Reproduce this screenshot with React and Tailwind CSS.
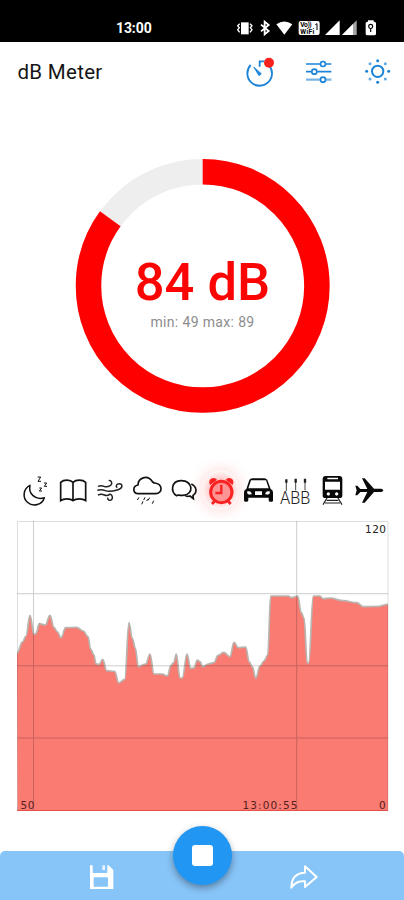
const POINTS = [
  [17, 653], [22.7, 641.7], [26, 636], [30, 615.3], [34, 634.3], [36, 633.3], [39.3, 623.7], [45.3, 625],
  [50, 615.3], [54, 627.3], [57.3, 631.7], [61, 637.7], [65.7, 627.7], [76.7, 627.3], [83.3, 631],
  [88, 636.7], [90.7, 649.3], [94, 655], [96, 664], [99.3, 664.3], [102.7, 659.3], [106.7, 670.7],
  [114.7, 671.3], [118.7, 683], [124.7, 679.3], [129, 622.7], [132.3, 638.3], [135.3, 648],
  [138.3, 666.7], [145.7, 664], [150, 654], [154, 674], [162, 674], [167.3, 676], [171, 665.3],
  [173.7, 662.7], [176.3, 654], [180, 678], [182.3, 678], [187, 654], [190.7, 668.3], [194, 668],
  [197.3, 660], [200, 661.7], [202.7, 666.7], [208, 664], [214, 662.7], [218, 655.3], [223.7, 652.3],
  [230, 656.7], [234, 642.3], [238.3, 647.7], [245.7, 647], [249.3, 662], [252.5, 667], [255.7, 678.3],
  [260, 666], [264, 661], [267.7, 655], [270.7, 596], [288.3, 596], [291.7, 597.7], [297.7, 596],
  [301.3, 612.7], [304, 618], [307.3, 663.3], [308.7, 662.7], [313.3, 596], [320, 596], [323, 598.7],
  [330, 598], [343.3, 600.7], [356.7, 602.7], [363.3, 606.7], [378.3, 606.3], [388, 604.3],
];

// Horizontal control points keep every sample a soft step
const smoothPath = (points) =>
  points.reduce((d, [x, y], i) => {
    if (i === 0) return `M${x} ${y}`;
    const [px, py] = points[i - 1];
    const a = px + (x - px) * 0.4;
    const b = x - (x - px) * 0.4;
    return `${d} C${a} ${py} ${b} ${y} ${x} ${y}`;
  }, '');

function StatusBar() {
  return (
    <div className="h-[42px] shrink-0 bg-black flex items-center pt-[13px] pl-[116px]">
      <span className="w-[120px] text-[14px] leading-none font-bold tracking-[-0.1px] text-white">13:00</span>
      <svg viewBox="48 50 432 66" className="w-[144px] h-[22px]" fill="#fff">
        {/* vibration */}
        <path d="M63 66h23v36H63z" />
        <path d="M59 70l-6 6 5 6-5 6 6 8M90 70l6 6-5 6 5 6-6 8" fill="none" stroke="#fff" strokeWidth="4" />
        {/* bluetooth */}
        <path d="M123 73l23 19-12 10V64l12 10-23 19" fill="none" stroke="#fff" strokeWidth="5.5" />
        {/* wifi */}
        <path d="M169 72q24-17 48 0l-24 31z" />
        {/* vo wifi */}
        <rect x="236" y="62" width="63" height="42" rx="6" />
        <text x="241" y="81" fontSize="20" fontWeight="700" fill="#000" textLength="34">Vo))</text>
        <text x="241" y="100" fontSize="20" fontWeight="700" fill="#000" textLength="42">WiFi</text>
        <path d="M286 73l5-3v19" fill="none" stroke="#000" strokeWidth="3" />
        {/* signal */}
        <path d="M359 60v44h-44z" />
        <path d="M410 60v44h-44z" opacity=".65" />
        <path d="M399 71v33h-33z" />
        {/* battery */}
        <path d="M444 60h17v4h2q5 0 5 5v31q0 5-5 5h-21q-5 0-5-5V69q0-5 5-5h2z" />
        <path d="M452 95V85m-6-7a6 6 0 1 1 12 0q0 6-6 8-6-2-6-8z" fill="none" stroke="#000" strokeWidth="3.5" />
      </svg>
    </div>
  );
}

function Header() {
  return (
    <header className="h-[60px] shrink-0 flex items-center justify-between pl-[17.5px] pr-[12px]">
      <h1 className="text-[20.5px] leading-none tracking-[0.3px] text-[#161616]">dB Meter</h1>
      <div className="flex text-[#1c84d8]">
        {/* timer */}
        <svg viewBox="75 166 90 93" className="w-[30px] h-[31px]" fill="none" stroke="currentColor">
          <path d="M92 190a37 37 0 1 0 55 1M119 195v-16h14" strokeWidth="5.5" />
          <path d="M101 196l23 20-7 6z" fill="currentColor" strokeWidth="2.5" />
          <circle cx="147" cy="183" r="15" fill="#f9211c" stroke="none" />
        </svg>
        {/* sliders */}
        <svg viewBox="255 171 81 90" className="ml-[30px] w-[27px] h-[30px]" fill="none" stroke="currentColor" strokeWidth="5">
          <path d="M258 192h43M317 192h17M258 215h16M292 215h42" />
          <path d="M258 239h43M317 239h17" strokeWidth="7" opacity=".6" />
          <circle cx="309" cy="192" r="7.5" />
          <circle cx="283" cy="215" r="7.5" />
          <circle cx="309" cy="239" r="7.5" />
        </svg>
        {/* brightness */}
        <svg viewBox="432 172 84 87" className="ml-[32px] w-[28px] h-[29px]" fill="currentColor">
          <circle cx="473" cy="215" r="17" fill="none" stroke="currentColor" strokeWidth="6" />
          <circle cx="473" cy="183" r="4.5" />
          <circle cx="473" cy="248" r="4.5" />
          <circle cx="440" cy="215" r="4.5" />
          <circle cx="506" cy="215" r="4.5" />
          <circle cx="450" cy="192" r="4.5" opacity=".7" />
          <circle cx="496" cy="192" r="4.5" opacity=".7" />
          <circle cx="450" cy="238" r="4.5" opacity=".7" />
          <circle cx="496" cy="238" r="4.5" opacity=".7" />
        </svg>
      </div>
    </header>
  );
}

function Gauge() {
  return (
    <div className="mt-[56px] ml-[75px] size-[255px] shrink-0 grid">
      <svg viewBox="0 0 255 255" className="col-start-1 row-start-1 size-[255px]" fill="none" strokeWidth="25.5">
        <circle cx="127.7" cy="127.9" r="114.2" stroke="#eeeeee" />
        <circle
          cx="127.7"
          cy="127.9"
          r="114.2"
          stroke="#ff0000"
          pathLength="100"
          strokeDasharray="85 15"
          transform="rotate(-90 127.7 127.9)"
        />
      </svg>
      <div className="col-start-1 row-start-1 flex flex-col items-center pt-[97px]">
        <div className="text-[52.5px] leading-[54px] font-medium text-[#fb0404] whitespace-nowrap">84 dB</div>
        <div className="mt-[5px] text-[14px] leading-[16px] tracking-[0.35px] text-[#8d8d8d] whitespace-nowrap">min: 49 max: 89</div>
      </div>
    </div>
  );
}

const ICON = 'w-[37px] h-[40px]';

function NoiseLevels() {
  return (
    <div className="mt-[57px] ml-[17px] flex shrink-0">
      {/* sleep */}
      <svg viewBox="21 30 111 120" className={ICON} fill="none" stroke="#111" strokeWidth="4.5">
        <path d="M60 76A31 31 0 1 0 103 113C76 122 54 100 60 76z" strokeLinejoin="round" />
        <path d="M83 51h9l-8 13h9M102 69h8l-7 10h8M88 84h7l-7 9h8" strokeWidth="3" />
      </svg>
      {/* book */}
      <svg viewBox="132 30 111 120" className={ICON} fill="none" stroke="#111" strokeWidth="5">
        <path d="M189 67c-8-9-28-9-37 0v55c9-7 29-7 37 0 9-7 29-7 38 0V67c-9-9-29-9-38 0zv55" />
      </svg>
      {/* wind */}
      <svg viewBox="243 30 111 120" className={ICON} fill="none" stroke="#222" strokeWidth="4.5">
        <path d="M264 79q9-4 18 0t20-3c7-7 1-17-6-14M262 91q12-4 24 1t38-3c15-4 15-18 4-18-9 0-12 9-6 12M264 105q10-4 19 0t16-2c10-1 11 18 1 18-6 0-8-5-6-8" />
      </svg>
      {/* rain */}
      <svg viewBox="24 30 111 120" className={ICON} fill="none" stroke="#111" strokeWidth="5">
        <path d="M53 101C38 99 37 78 54 75c0-20 27-34 44-9q4 3 6 3c25 3 25 31 3 32z" strokeLinejoin="round" />
        <path d="M57 112l-5 8M75 112l-4 8M89 113l-5 8M69 124l-4 9M83 118l-3 5M101 122l-4 9" strokeWidth="3" />
      </svg>
      {/* conversation */}
      <svg viewBox="135 30 111 120" className={ICON} fill="none" stroke="#111" strokeWidth="5">
        <path d="M170 107c-19-11-17-44 13-45 37-1 40 42 6 44-8 1-12-1-14-1z" strokeLinejoin="round" />
        <path d="M214 72c17 8 18 25 5 34l1 10-10-8c-7 2-13 0-16-2" />
      </svg>
      {/* alarm, the active level */}
      <div className="rounded-full shadow-[0_0_14px_rgba(255,80,80,0.25)] bg-[radial-gradient(circle,rgba(255,60,60,0.55),rgba(255,90,90,0.05)_70%)]">
        <svg viewBox="246 30 111 120" className={ICON} fill="none" stroke="#f92222" strokeWidth="8">
          <circle cx="304" cy="96" r="32" strokeWidth="9" fill="#ff9494" />
          <path d="M304 74v25h-18" strokeWidth="7" />
          <path d="M284 123l-8 9M324 123l8 9" />
          <path d="M271 72c-5-13 8-20 17-13zM337 72c5-13-8-20-17-13z" fill="#f92222" strokeWidth="4" />
        </svg>
      </div>
      {/* car */}
      <svg viewBox="12 30 111 120" className={ICON} fill="#090909">
        <path
          fillRule="evenodd"
          d="M43 60q3-5 9-5h36q6 0 9 5l10 27q7 3 7 10v25q0 3-4 3h-5q-4 0-4-4v-8H40v8q0 4-4 4h-5q-4 0-4-4V97q0-7 7-10zM48 61l-8 24h61l-8-24zM37 94q-3 11 13 9c0-8-5-9-13-9zM104 94q3 11-13 9c0-8 5-9 13-9zM60 94v11h21V94z"
        />
      </svg>
      {/* festival */}
      <svg viewBox="123 30 111 120" className={ICON} fill="none" stroke="#222" strokeWidth="2.5">
        <path d="M154 63v30M182 63v28M210 63v28" />
        <path d="M154 58v10M182 56v12M210 56v12" strokeWidth="7" />
        <text
          x="135"
          y="132"
          fontSize="54"
          fontWeight="300"
          textLength="91"
          lengthAdjust="spacingAndGlyphs"
          fontFamily="Roboto"
          fill="#222"
          stroke="none"
        >
          ABB
        </text>
      </svg>
      {/* train */}
      <svg viewBox="234 30 111 120" className={ICON} fill="#090909">
        <path
          fillRule="evenodd"
          d="M272 48h41q9 0 9 9v50q0 7-8 7h-43q-8 0-8-7V57q0-9 9-9zM277 53v5h32v-5zM270 65v24h45V65zM280 97a5 5 0 1 0 .1 0zM305 97a5 5 0 1 0 .1 0z"
        />
        <path d="M276 114l-12 20M309 114l12 20M275 121h35M270 129h45" fill="none" stroke="#222" strokeWidth="3.5" />
      </svg>
      {/* plane */}
      <svg viewBox="345 30 111 120" className={ICON} fill="#090909">
        <path d="M361 77h6l9 10h21L381 55h8l28 31h22q6 2 6 5t-6 5h-22l-28 32h-8l16-32h-21l-9 10h-6l4-15z" />
      </svg>
    </div>
  );
}

function Chart() {
  const line = smoothPath(POINTS);
  return (
    <svg viewBox="17 520 372 292" className="mt-[10px] ml-[17px] w-[372px] h-[292px] shrink-0">
      <path d={`${line} V811 H17.5 Z`} fill="#f97b72" />
      <path d={line} fill="none" stroke="#b9b5b0" strokeWidth="1.7" />
      <g stroke="#000" strokeWidth="1">
        <path d="M17.5 811V521.5H388V811" fill="none" opacity=".13" />
        <path d="M17 593.7H388M17 665.8H388M17 738H388M33.5 521V811M296.7 521V811" opacity=".19" />
      </g>
      <path d="M17 810.5H388" stroke="#e54f49" />
      <g fontSize="10.5" fontFamily="DejaVu Sans, sans-serif" fill="#222">
        <text x="365" y="532.5" textLength="21">120</text>
        <text x="20.5" y="808.5" textLength="14" fill="#54201d">50</text>
        <text x="242.5" y="808.5" textLength="55" fill="#54201d">13:00:55</text>
        <text x="379" y="808.5" fill="#54201d">0</text>
      </g>
    </svg>
  );
}

function BottomBar() {
  return (
    <div className="mt-[39px] h-[49px] shrink-0 rounded-t-[5px] bg-[#87c4f8] relative flex items-center pt-[2px]">
      {/* save */}
      <svg viewBox="267 162 75 78" className="ml-[89px] w-[25px] h-[26px]" fill="#fff">
        <path
          fillRule="evenodd"
          d="M270 166h8v20q0 3 3 3h38q3 0 3-3v-20h4l14 14v57h-70zM281 205v23q0 2 2 2h39q2 0 2-2v-23q0-3-3-3h-37q-3 0-3 3z"
        />
        <path d="M307 166h8v14h-8z" opacity=".8" />
      </svg>
      {/* share */}
      <svg viewBox="867 162 90 78" className="ml-[175px] w-[30px] h-[26px]" fill="none" stroke="#fff" strokeWidth="6" strokeLinejoin="round">
        <path d="M915 169l35 32-35 30v-17c-20-1-30 4-41 19 0-28 14-44 41-45z" />
      </svg>
      <button className="absolute left-[173px] top-[-25px] size-[59px] rounded-full bg-[#2196f3] shadow-[0_3px_7px_rgba(0,0,0,0.35)] flex items-center justify-center">
        <span className="size-[21px] rounded-[3px] bg-white" />
      </button>
    </div>
  );
}

export default function App() {
  return (
    <div className="w-[404px] h-[900px] overflow-hidden bg-white flex flex-col font-['Roboto',sans-serif]">
      <StatusBar />
      <Header />
      <Gauge />
      <NoiseLevels />
      <Chart />
      <BottomBar />
    </div>
  );
}
